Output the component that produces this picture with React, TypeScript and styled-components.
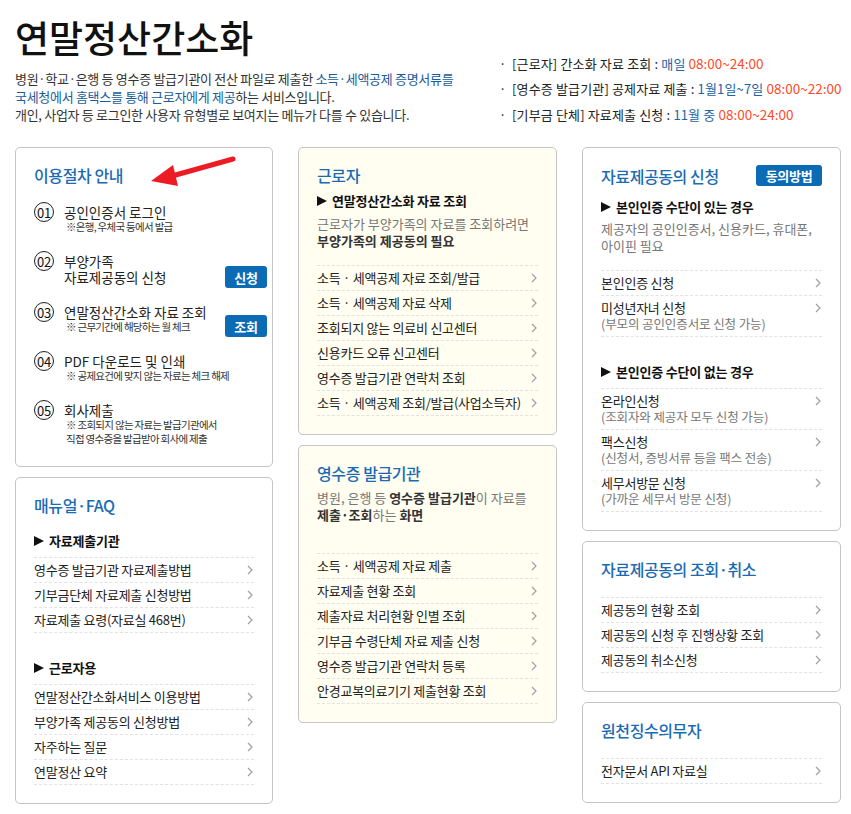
import React from "react";
import styled, { createGlobalStyle } from "styled-components";

const GlobalStyle = createGlobalStyle`
  body {
    margin: 0;
    background: #fff;
    font-family: "Noto Sans CJK KR", "Liberation Sans", sans-serif;
    color: #222;
  }
`;

const Page = styled.div`
  width: 851px;
  box-sizing: border-box;
  padding: 19px 10px 0 15px;
`;

const Header = styled.header`
  display: flex;
  justify-content: space-between;
  align-items: flex-end;
`;

const Title = styled.h1`
  margin: 0;
  font-size: 37px;
  line-height: 37px;
  font-weight: 500;
  letter-spacing: 0;
  color: #111;
`;

const Intro = styled.p`
  margin: 14px 0 0;
  font-size: 13px;
  line-height: 18px;
  letter-spacing: -0.3px;
  color: #333;
`;

const Em = styled.span`
  color: #1a5c97;
`;

const Notices = styled.ul`
  list-style: none;
  margin: 0 0 -3px;
  padding: 0;
  width: 338px;
  font-size: 13px;
  line-height: 25.5px;
  letter-spacing: 0.15px;
  white-space: nowrap;
  color: #222;
`;

const Notice = styled.li`
  &::before {
    content: "·";
    display: inline-block;
    width: 13px;
    margin-left: -4px;
  }
`;

const Blue = styled.span`
  color: #1a64a8;
`;

const Time = styled.span`
  color: #ff4a26;
  font-size: 13.5px;
  letter-spacing: 0;
`;

const Columns = styled.div`
  display: grid;
  grid-template-columns: 258px 259px 259px;
  column-gap: 25px;
  align-items: start;
  margin-top: 23px;
`;

const Column = styled.div`
  display: flex;
  flex-direction: column;
  gap: 10px;
`;

const Panel = styled.section<{ $cream?: boolean; $bottom?: number }>`
  position: relative;
  border: 1px solid #c4c4c4;
  border-radius: 5px;
  background: ${(p) => (p.$cream ? "#fffef1" : "#fff")};
  padding: 17px 18px ${(p) => p.$bottom ?? 18}px;
`;

const TitleRow = styled.div`
  display: flex;
  justify-content: space-between;
  align-items: center;
`;

const PanelTitle = styled.h2`
  margin: 0;
  font-size: 16px;
  line-height: 20px;
  font-weight: 500;
  letter-spacing: -0.4px;
  color: #1b6bb3;
`;

const Badge = styled.span`
  display: inline-flex;
  align-items: center;
  justify-content: center;
  width: 66px;
  height: 21px;
  border-radius: 3px;
  background: #0b6bb4;
  color: #fff;
  font-size: 13px;
  font-weight: 700;
  letter-spacing: -0.3px;
`;

const Heading = styled.h3<{ $top: number; $bottom?: number }>`
  display: flex;
  align-items: center;
  gap: 5px;
  margin: ${(p) => p.$top}px 0 ${(p) => p.$bottom ?? 0}px;
  font-size: 13px;
  line-height: 18px;
  font-weight: 700;
  letter-spacing: -0.2px;
  color: #111;
  &::before {
    content: "";
    width: 0;
    height: 0;
    border-left: 10px solid #111;
    border-top: 5.5px solid transparent;
    border-bottom: 5.5px solid transparent;
  }
`;

const Desc = styled.p<{ $top: number }>`
  margin: ${(p) => p.$top}px 0 0;
  font-size: 13px;
  line-height: 17px;
  letter-spacing: 0;
  color: #777;
  b {
    color: #333;
    font-weight: 700;
  }
`;

const List = styled.ul<{ $top: number }>`
  list-style: none;
  margin: ${(p) => p.$top}px 0 0;
  padding: 0;
  border-top: 1px dashed #e2e2e2;
`;

const Row = styled.li`
  display: flex;
  justify-content: space-between;
  align-items: flex-start;
  padding: 4px 0;
  border-bottom: 1px dashed #e2e2e2;
  font-size: 13px;
  line-height: 16px;
  letter-spacing: -0.25px;
  color: #222;
  cursor: pointer;
`;

const Sub = styled.div`
  font-size: 12.5px;
  letter-spacing: -0.1px;
  color: #777;
`;

const Chevron = styled.svg`
  flex: none;
  margin-top: 3px;
  margin-right: 1px;
`;

const Steps = styled.ol`
  list-style: none;
  margin: 19px 0 0;
  padding: 0;
  display: flex;
  flex-direction: column;
  gap: 19px;
`;

const Step = styled.li`
  display: flex;
  align-items: flex-start;
`;

const Num = styled.span`
  flex: none;
  width: 18px;
  height: 18px;
  margin: -2px 10px 0 0;
  border: 1px solid #222;
  border-radius: 50%;
  display: flex;
  align-items: center;
  justify-content: center;
  font-size: 13px;
  letter-spacing: -0.3px;
  color: #111;
  background: #fafafa;
`;

const StepBody = styled.div`
  flex: 1;
`;

const StepTitle = styled.div`
  font-size: 13.5px;
  line-height: 16px;
  letter-spacing: 0;
  color: #222;
`;

const StepNote = styled.div`
  padding-left: 2px;
  font-size: 10.5px;
  line-height: 14px;
  letter-spacing: -0.7px;
  color: #333;
`;

const StepButton = styled.button`
  align-self: flex-end;
  flex: none;
  width: 42px;
  height: 22px;
  margin: 0 -13px -3px 0;
  padding: 0;
  border: 0;
  border-radius: 3px;
  background: #0b6bb4;
  color: #fff;
  font-family: inherit;
  font-size: 13px;
  font-weight: 700;
  letter-spacing: -0.3px;
`;

const Arrow = styled.svg`
  position: absolute;
  left: 130px;
  top: 3px;
`;

type Item = { label: string; sub?: string };

function LinkList({ items, top }: { items: Item[]; top: number }) {
  return (
    <List $top={top}>
      {items.map((it) => (
        <Row key={it.label}>
          <div>
            {it.label}
            {it.sub && <Sub>{it.sub}</Sub>}
          </div>
          <Chevron width="6" height="10" viewBox="0 0 6 10">
            <polyline points="1,1 5,5 1,9" fill="none" stroke="#a0a0a0" strokeWidth="1.2" />
          </Chevron>
        </Row>
      ))}
    </List>
  );
}

const steps = [
  { n: "01", title: ["공인인증서 로그인"], note: ["※은행, 우체국 등에서 발급"] },
  { n: "02", title: ["부양가족", "자료제공동의 신청"], note: [], button: "신청" },
  { n: "03", title: ["연말정산간소화 자료 조회"], note: ["※ 근무기간에 해당하는 월 체크"], button: "조회" },
  { n: "04", title: ["PDF 다운로드 및 인쇄"], note: ["※ 공제요건에 맞지 않는 자료는 체크 해제"] },
  {
    n: "05",
    title: ["회사제출"],
    note: ["※ 조회되지 않는 자료는 발급기관에서", "직접 영수증을 발급받아 회사에 제출"],
  },
];

export default function App() {
  return (
    <Page>
      <GlobalStyle />
      <Header>
        <div>
          <Title>연말정산간소화</Title>
          <Intro>
            병원·학교·은행 등 영수증 발급기관이 전산 파일로 제출한 <Em>소득·세액공제 증명서류를</Em>
            <br />
            <Em>국세청에서 홈택스를 통해 근로자에게 제공</Em>하는 서비스입니다.
            <br />
            개인, 사업자 등 로그인한 사용자 유형별로 보여지는 메뉴가 다를 수 있습니다.
          </Intro>
        </div>
        <Notices>
          <Notice>
            [근로자] 간소화 자료 조회 : <Blue>매일</Blue> <Time>08:00~24:00</Time>
          </Notice>
          <Notice>
            [영수증 발급기관] 공제자료 제출 : <Blue>1월1일~7일</Blue> <Time>08:00~22:00</Time>
          </Notice>
          <Notice>
            [기부금 단체] 자료제출 신청 : <Blue>11월 중</Blue> <Time>08:00~24:00</Time>
          </Notice>
        </Notices>
      </Header>

      <Columns>
        <Column>
          <Panel $bottom={20}>
            <PanelTitle>이용절차 안내</PanelTitle>
            <Arrow width="95" height="40" viewBox="0 0 95 40">
              <line x1="26" y1="25" x2="87" y2="8" stroke="#ed1c24" strokeWidth="5" strokeLinecap="round" />
              <polygon points="5,30 27,14 32,35" fill="#ed1c24" />
            </Arrow>
            <Steps>
              {steps.map((s) => (
                <Step key={s.n}>
                  <Num>{s.n}</Num>
                  <StepBody>
                    {s.title.map((t) => (
                      <StepTitle key={t}>{t}</StepTitle>
                    ))}
                    {s.note.map((t) => (
                      <StepNote key={t}>{t}</StepNote>
                    ))}
                  </StepBody>
                  {s.button && <StepButton>{s.button}</StepButton>}
                </Step>
              ))}
            </Steps>
          </Panel>

          <Panel>
            <PanelTitle>매뉴얼·FAQ</PanelTitle>
            <Heading $top={17} $bottom={7}>자료제출기관</Heading>
            <LinkList
              top={0}
              items={[
                { label: "영수증 발급기관 자료제출방법" },
                { label: "기부금단체 자료제출 신청방법" },
                { label: "자료제출 요령(자료실 468번)" },
              ]}
            />
            <Heading $top={26} $bottom={7}>근로자용</Heading>
            <LinkList
              top={0}
              items={[
                { label: "연말정산간소화서비스 이용방법" },
                { label: "부양가족 제공동의 신청방법" },
                { label: "자주하는 질문" },
                { label: "연말정산 요약" },
              ]}
            />
          </Panel>
        </Column>

        <Column>
          <Panel $cream>
            <PanelTitle>근로자</PanelTitle>
            <Heading $top={7}>연말정산간소화 자료 조회</Heading>
            <Desc $top={5}>
              근로자가 부양가족의 자료를 조회하려면
              <br />
              <b>부양가족의 제공동의 필요</b>
            </Desc>
            <LinkList
              top={16}
              items={[
                { label: "소득 · 세액공제 자료 조회/발급" },
                { label: "소득 · 세액공제 자료 삭제" },
                { label: "조회되지 않는 의료비 신고센터" },
                { label: "신용카드 오류 신고센터" },
                { label: "영수증 발급기관 연락처 조회" },
                { label: "소득 · 세액공제 조회/발급(사업소득자)" },
              ]}
            />
          </Panel>

          <Panel $cream>
            <PanelTitle>영수증 발급기관</PanelTitle>
            <Desc $top={6}>
              병원, 은행 등 <b>영수증 발급기관</b>이 자료를
              <br />
              <b>제출·조회</b>하는 <b>화면</b>
            </Desc>
            <LinkList
              top={30}
              items={[
                { label: "소득 · 세액공제 자료 제출" },
                { label: "자료제출 현황 조회" },
                { label: "제출자료 처리현황 인별 조회" },
                { label: "기부금 수령단체 자료 제출 신청" },
                { label: "영수증 발급기관 연락처 등록" },
                { label: "안경교복의료기기 제출현황 조회" },
              ]}
            />
          </Panel>
        </Column>

        <Column>
          <Panel>
            <TitleRow>
              <PanelTitle>자료제공동의 신청</PanelTitle>
              <Badge>동의방법</Badge>
            </TitleRow>
            <Heading $top={12}>본인인증 수단이 있는 경우</Heading>
            <Desc $top={4}>
              제공자의 공인인증서, 신용카드, 휴대폰,
              <br />
              아이핀 필요
            </Desc>
            <LinkList
              top={16}
              items={[
                { label: "본인인증 신청" },
                { label: "미성년자녀 신청", sub: "(부모의 공인인증서로 신청 가능)" },
              ]}
            />
            <Heading $top={26} $bottom={7}>본인인증 수단이 없는 경우</Heading>
            <LinkList
              top={0}
              items={[
                { label: "온라인신청", sub: "(조회자와 제공자 모두 신청 가능)" },
                { label: "팩스신청", sub: "(신청서, 증빙서류 등을 팩스 전송)" },
                { label: "세무서방문 신청", sub: "(가까운 세무서 방문 신청)" },
              ]}
            />
          </Panel>

          <Panel>
            <PanelTitle>자료제공동의 조회·취소</PanelTitle>
            <LinkList
              top={18}
              items={[
                { label: "제공동의 현황 조회" },
                { label: "제공동의 신청 후 진행상황 조회" },
                { label: "제공동의 취소신청" },
              ]}
            />
          </Panel>

          <Panel>
            <PanelTitle>원천징수의무자</PanelTitle>
            <LinkList top={18} items={[{ label: "전자문서 API 자료실" }]} />
          </Panel>
        </Column>
      </Columns>
    </Page>
  );
}
